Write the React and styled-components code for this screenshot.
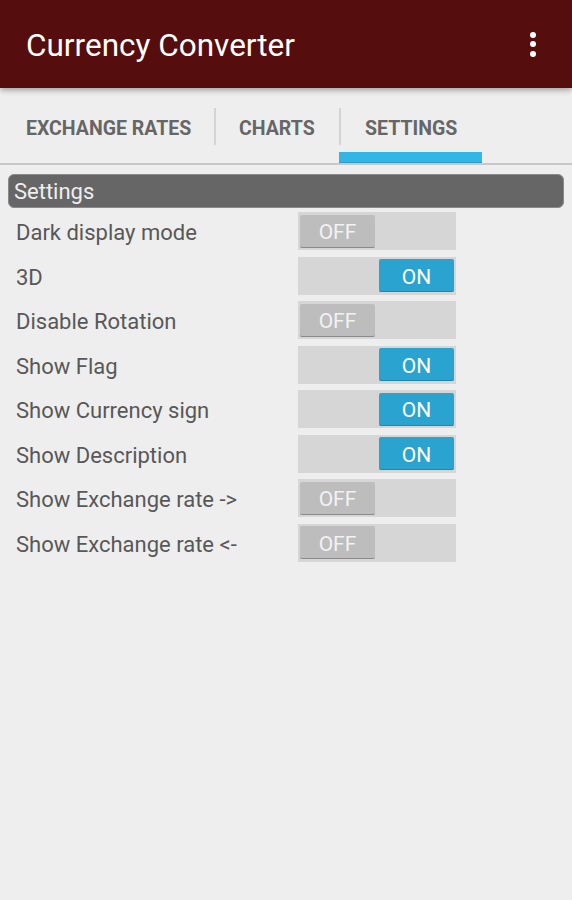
import React from 'react';
import styled, { createGlobalStyle } from 'styled-components';

const GlobalStyle = createGlobalStyle`
  html, body {
    margin: 0;
    padding: 0;
    background: #eeeeee;
    font-family: Roboto, "Noto Sans", sans-serif;
  }
`;

const Page = styled.div`
  width: 572px;
  min-height: 900px;
  background: #eeeeee;
`;

const AppBar = styled.header`
  position: relative;
  z-index: 2;
  height: 88px;
  background: #560d0d;
  display: flex;
  align-items: center;
  justify-content: space-between;
  padding: 0 36px 0 26px;
  box-sizing: border-box;
  box-shadow: 0 2px 6px rgba(0, 0, 0, 0.35);
`;

const Title = styled.h1`
  margin: 0;
  font-size: 31.5px;
  font-weight: 400;
  color: #ffffff;
  padding-top: 2px;
`;

const Overflow = styled.div`
  display: flex;
  flex-direction: column;
  gap: 3.5px;

  span {
    width: 6px;
    height: 6px;
    border-radius: 50%;
    background: #ffffff;
  }
`;

const TabBar = styled.nav`
  height: 75px;
  display: flex;
  align-items: stretch;
  border-bottom: 2px solid #c8c8c8;
  background: #eeeeee;
`;

const Tab = styled.div`
  position: relative;
  display: flex;
  align-items: center;
  width: ${p => p.$width}px;
  padding-left: ${p => p.$pad}px;
  box-sizing: border-box;
  font-size: 19.5px;
  font-weight: 700;
  color: #666666;
  padding-top: 5px;

  ${p => p.$divider && `
    &::before {
      content: '';
      position: absolute;
      left: 0;
      top: 20px;
      height: 37px;
      width: 2px;
      background: #d4d4d4;
    }
  `}

  ${p => p.$active && `
    &::after {
      content: '';
      position: absolute;
      left: 0;
      right: 0;
      bottom: 0;
      height: 11px;
      background: #33b5e5;
      border-bottom: 1px solid #2a9cc6;
      box-sizing: border-box;
    }
  `}
`;

const Content = styled.main`
  padding: 9px 8px 0 8px;
`;

const SectionHeader = styled.div`
  height: 34px;
  background: #666666;
  border: 1px solid #8a8a8a;
  border-radius: 6px;
  box-sizing: border-box;
  display: flex;
  align-items: center;
  padding-left: 5px;
  padding-top: 1px;
  font-size: 22px;
  color: #eeeeee;
  margin-bottom: 1px;
`;

const Row = styled.div`
  display: grid;
  grid-template-columns: 290px 158px;
  align-items: center;
  height: 44.5px;
`;

const Label = styled.div`
  padding-left: 8px;
  font-size: 22px;
  color: #585858;
  padding-top: 3px;
`;

const Track = styled.div`
  height: 38px;
  background: #d6d6d6;
  display: flex;
  align-items: center;
  justify-content: ${p => (p.$on ? 'flex-end' : 'flex-start')};
  padding: 0 2px;
  box-sizing: border-box;
`;

const Thumb = styled.div`
  width: 75px;
  height: 33px;
  border-radius: 2px;
  display: flex;
  align-items: center;
  justify-content: center;
  font-size: 21px;
  background: ${p => (p.$on ? '#2aa3d0' : '#bdbdbd')};
  color: ${p => (p.$on ? '#ffffff' : '#f2f2f2')};
  border-bottom: 1.5px solid ${p => (p.$on ? '#1f86ad' : '#8a8a8a')};
  box-sizing: border-box;
  padding-top: 3px;
`;

const settings = [
  ['Dark display mode', false],
  ['3D', true],
  ['Disable Rotation', false],
  ['Show Flag', true],
  ['Show Currency sign', true],
  ['Show Description', true],
  ['Show Exchange rate ->', false],
  ['Show Exchange rate <-', false],
];

export default function App() {
  return (
    <Page>
      <GlobalStyle />
      <AppBar>
        <Title>Currency Converter</Title>
        <Overflow>
          <span />
          <span />
          <span />
        </Overflow>
      </AppBar>

      <TabBar>
        <Tab $width={214} $pad={26}>EXCHANGE RATES</Tab>
        <Tab $width={125} $pad={25} $divider>CHARTS</Tab>
        <Tab $width={143} $pad={26} $divider $active>SETTINGS</Tab>
      </TabBar>

      <Content>
        <SectionHeader>Settings</SectionHeader>
        {settings.map(([label, on]) => (
          <Row key={label}>
            <Label>{label}</Label>
            <Track $on={on}>
              <Thumb $on={on}>{on ? 'ON' : 'OFF'}</Thumb>
            </Track>
          </Row>
        ))}
      </Content>
    </Page>
  );
}
